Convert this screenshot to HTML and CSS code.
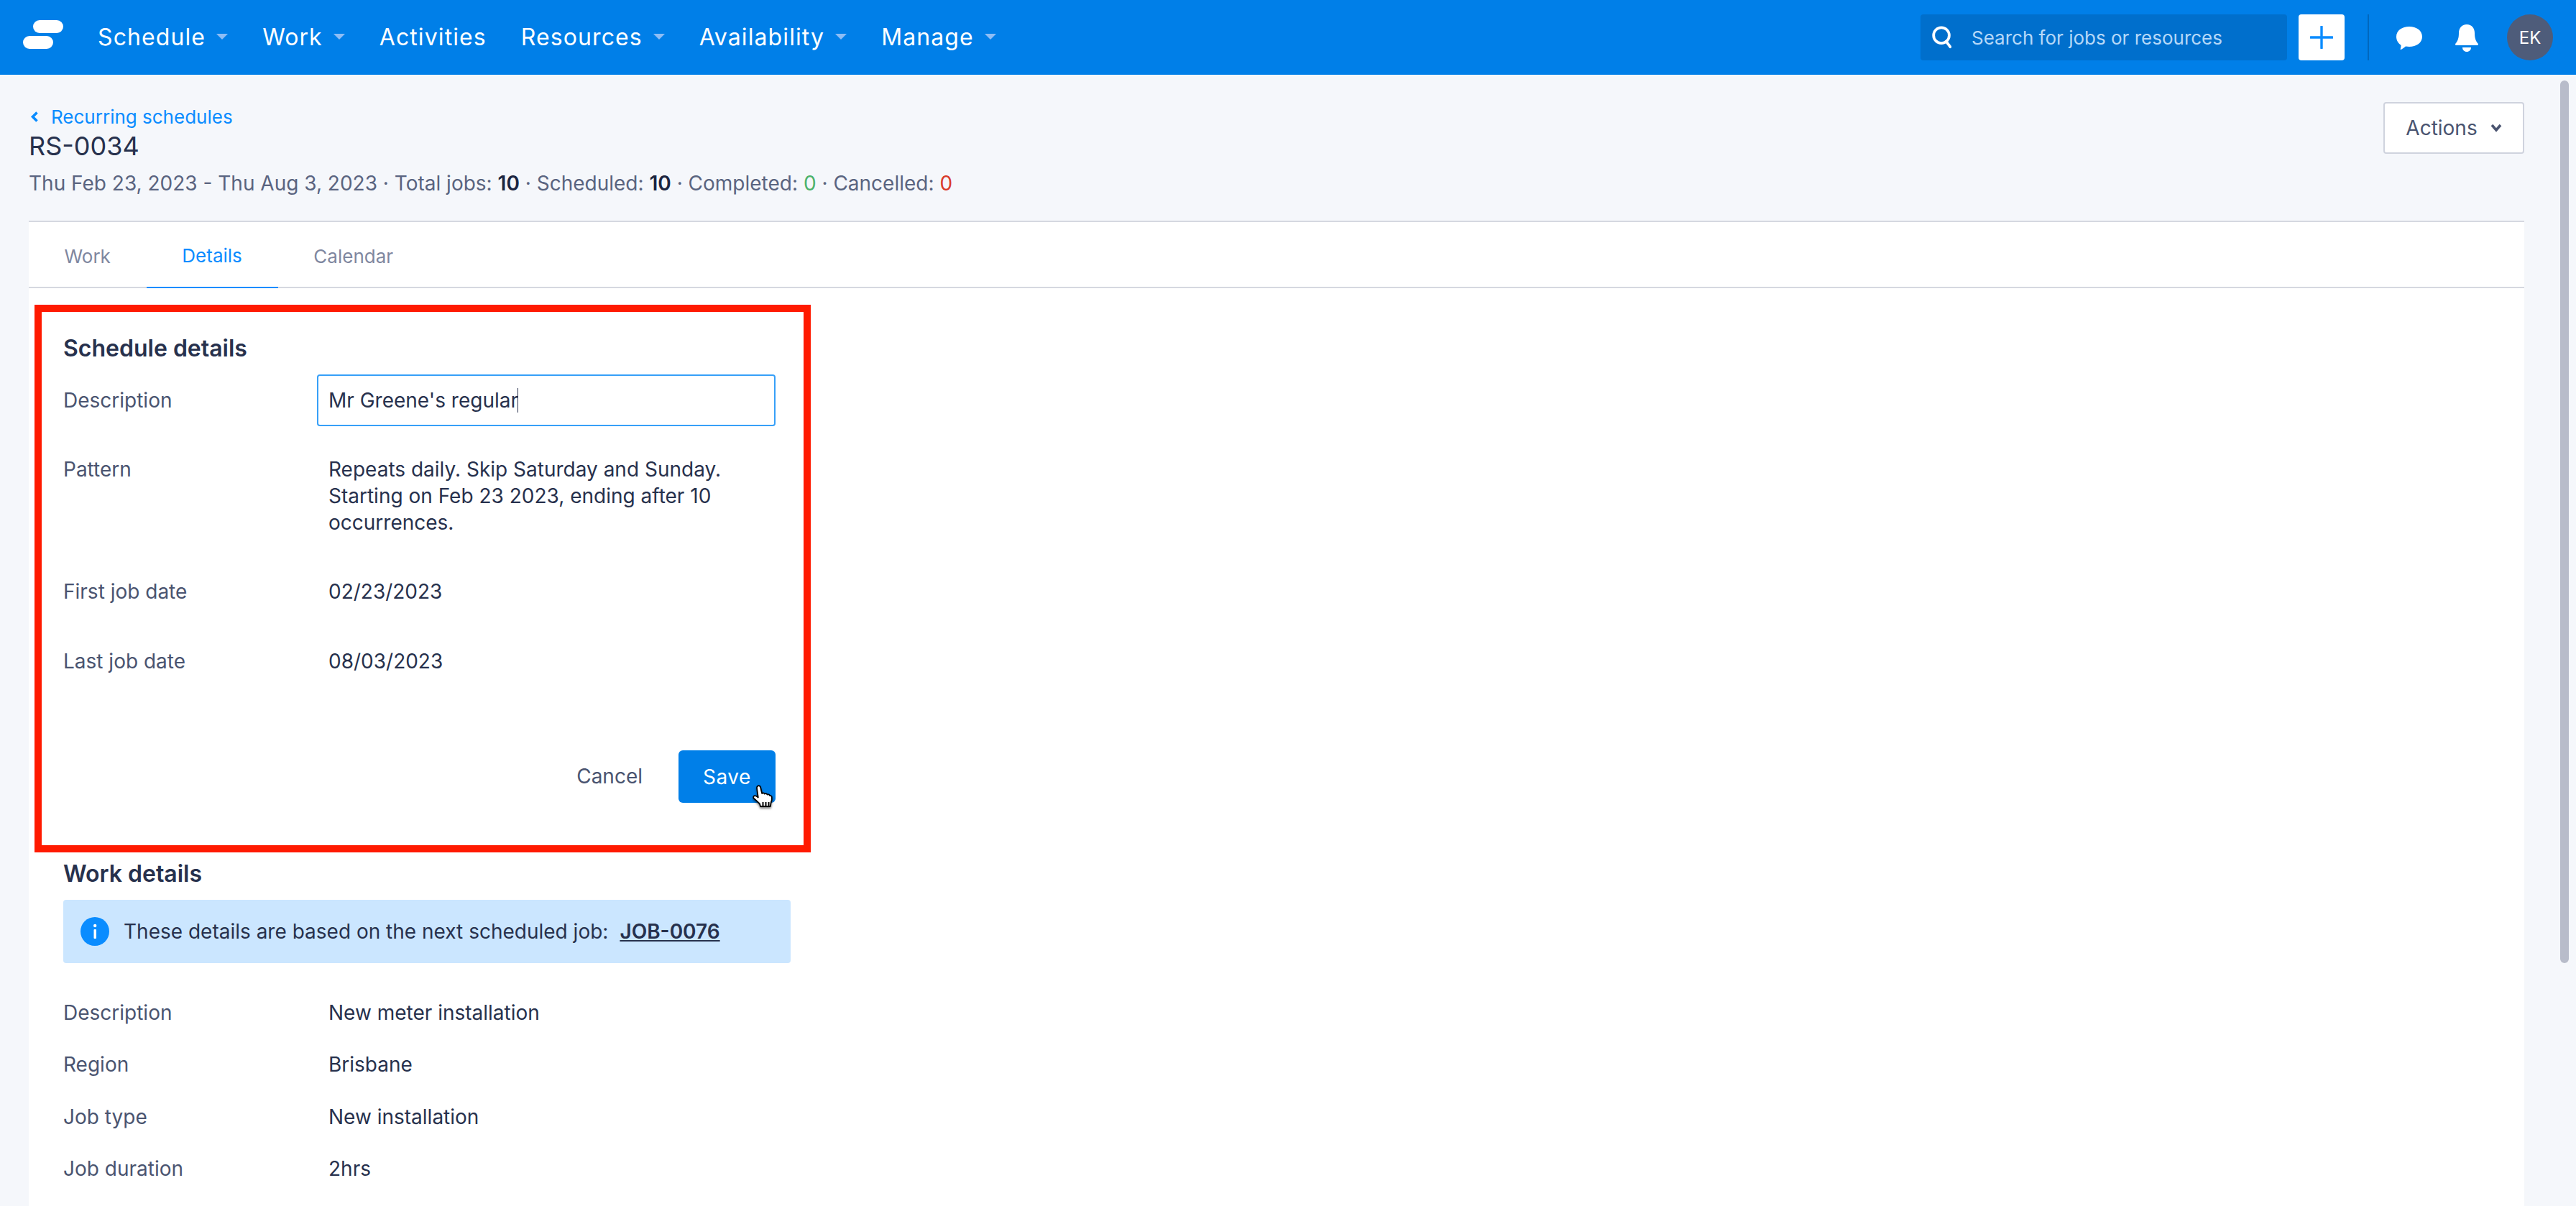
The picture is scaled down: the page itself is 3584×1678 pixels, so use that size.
FILE: index.html
```html
<!DOCTYPE html>
<html lang="en">
<head>
<meta charset="utf-8">
<title>RS-0034</title>
<link rel="stylesheet" href="styles.css">
</head>
<body>
<header class="topbar">
  <svg class="logo" viewBox="0 0 56 40" width="56" height="40"><rect x="14" y="0" width="42" height="18" rx="9" fill="#fff"/><rect x="0" y="22" width="42" height="18" rx="9" fill="#fff"/></svg>
  <nav class="nav">
    <a class="nav-item has-caret">Schedule</a>
    <a class="nav-item has-caret">Work</a>
    <a class="nav-item">Activities</a>
    <a class="nav-item has-caret">Resources</a>
    <a class="nav-item has-caret">Availability</a>
    <a class="nav-item has-caret">Manage</a>
  </nav>
  <div class="top-right">
    <div class="search">
      <svg viewBox="0 0 32 36" width="32" height="34"><circle cx="15" cy="15" r="11.5" fill="none" stroke="#fff" stroke-width="4"/><path d="M22 24l6 8" stroke="#fff" stroke-width="4" stroke-linecap="round"/></svg>
      <span class="search-text">Search for jobs or resources</span>
    </div>
    <div class="plus"><svg viewBox="0 0 32 32" width="32" height="32"><path d="M16 1v30M1 16h30" stroke="#0a8cff" stroke-width="3.4" stroke-linecap="round"/></svg></div>
    <div class="divider"></div>
    <svg class="chat" viewBox="0 0 36 32" width="36" height="32"><path d="M18 0c10 0 18 5.500 18 14s-8 14-18 14c-2 0-3.500-.2-5-.5C10.500 29.500 8 31 6.500 32c-.6.2-1-.2-.8-.8.500-1.500.800-3 .800-5.500C2.500 23 0 19 0 14 0 5.500 8 0 18 0z" fill="#fff"/></svg>
    <svg class="bell" viewBox="0 0 32 38" width="32" height="38"><path d="M16 0c7 0 11 5 11 12 0 7 1.500 11 4.500 14.500.8 1 .5 2.500-1 2.500H1.500c-1.500 0-1.800-1.500-1-2.500C3.500 23 5 19 5 12 5 5 9 0 16 0z" fill="#fff"/><path d="M10 32h12c0 3.500-2.500 6-6 6s-6-2.500-6-6z" fill="#fff"/></svg>
    <div class="avatar">EK</div>
  </div>
</header>

<main class="page">
  <div class="page-head">
    <div class="head-text">
      <a class="crumb"><svg viewBox="0 0 11 15" width="11" height="15"><path d="M9.500 1.500L3.500 7.500l6 6" fill="none" stroke="#0a8cff" stroke-width="3.600"/></svg>Recurring schedules</a>
      <h1 class="title">RS-0034</h1>
      <p class="meta">Thu Feb 23, 2023 - Thu Aug 3, 2023 · Total jobs: <b>10</b> · Scheduled: <b>10</b> · Completed: <span class="green">0</span> · Cancelled: <span class="red">0</span></p>
    </div>
    <button class="actions">Actions<svg viewBox="0 0 16 12" width="16" height="12"><path d="M2 2l6 7 6-7" fill="none" stroke="#4a5470" stroke-width="3.600"/></svg></button>
  </div>

  <section class="panel">
    <div class="tabs">
      <a class="tab">Work</a>
      <a class="tab active">Details</a>
      <a class="tab">Calendar</a>
    </div>
    <div class="content">
      <h2 class="section-title">Schedule details</h2>
      <div class="form-row input-row">
        <span class="label">Description</span>
        <div class="input">Mr Greene's regular<span class="caret"></span></div>
      </div>
      <div class="form-row pattern-row">
        <span class="label">Pattern</span>
        <span class="value">Repeats daily. Skip Saturday and Sunday. Starting on Feb 23 2023, ending after 10 occurrences.</span>
      </div>
      <div class="form-row date-row">
        <span class="label">First job date</span>
        <span class="value">02/23/2023</span>
      </div>
      <div class="form-row date-row">
        <span class="label">Last job date</span>
        <span class="value">08/03/2023</span>
      </div>
      <div class="form-actions">
        <a class="cancel">Cancel</a>
        <button class="save">Save</button>
      </div>

      <h2 class="section-title work-title">Work details</h2>
      <div class="alert">
        <svg viewBox="0 0 40 40" width="40" height="40"><circle cx="20" cy="20" r="20" fill="#0a8cff"/><rect x="18.500" y="17" width="3.500" height="13" rx="1" fill="#fff"/><circle cx="20.200" cy="12" r="2.200" fill="#fff"/></svg>
        <span>These details are based on the next scheduled job:</span>
        <a class="alert-link">JOB-0076</a>
      </div>
      <div class="form-row detail-row"><span class="label">Description</span><span class="value">New meter installation</span></div>
      <div class="form-row detail-row"><span class="label">Region</span><span class="value">Brisbane</span></div>
      <div class="form-row detail-row"><span class="label">Job type</span><span class="value">New installation</span></div>
      <div class="form-row detail-row"><span class="label">Job duration</span><span class="value">2hrs</span></div>
    </div>
  </section>
</main>

<div class="highlight"></div>
<svg class="hand" viewBox="0 0 34 38" width="34" height="38"><defs><filter id="s" x="-30%" y="-30%" width="160%" height="160%"><feDropShadow dx="0" dy="2" stdDeviation="1.500" flood-color="#000" flood-opacity=".5"/></filter></defs><path filter="url(#s)" d="M8 2c1.500-1.500 3.500-.8 4 1l2.200 9c1-1 3-.8 3.600.6 1-1 3.200-.6 3.600 1 1.200-.6 3-.2 3.600 1.400.8-.2 2.500.2 2.800 2 .4 3-.2 6-1.200 8l-.8 5H12l-1-3.500c-2-2-5.500-5.500-8-7.500-1.500-1.500-.8-3.500 1-3.800 1.500-.2 3 .8 4.800 2.300L7 4.500C6.800 3.500 7.200 2.600 8 2z" fill="#fff" stroke="#000" stroke-width="1.800" stroke-linejoin="round"/><path d="M15.500 24v6.500M19.500 24v6.500M23.500 24v6.500" stroke="#000" stroke-width="2"/></svg>
<div class="scrollbar"></div>
</body>
</html>
```

FILE: styles.css
```css
* { box-sizing: border-box; }
html, body { margin: 0; padding: 0; height: 100%; overflow: hidden; }
body {
  background: #f5f7fb;
  font-family: Inter, "Liberation Sans", sans-serif;
  font-size: 28px;
  line-height: 37px;
  color: #27314d;
}
a { color: inherit; text-decoration: none; }
h1, h2, p { margin: 0; font-weight: 400; }
button { font-family: inherit; cursor: pointer; }

.topbar {
  height: 104px;
  background: #007fe8;
  display: flex;
  align-items: center;
  padding: 0 32px;
}
.logo { flex: none; margin-top: -8px; }
.nav { display: flex; margin-left: 48px; margin-top: -2px; gap: 48px; }
.nav-item {
  color: #fff;
  font-size: 32px;
  font-weight: 400;
  letter-spacing: 1.100px;
  display: flex;
  align-items: center;
}
.has-caret::after {
  content: "";
  margin-left: 15px;
  border-left: 8.500px solid transparent;
  border-right: 8.500px solid transparent;
  border-top: 8px solid #8dbdf5;
}
.top-right { margin-left: auto; display: flex; align-items: center; }
.search {
  width: 510px;
  height: 64px;
  background: #006fcc;
  border-radius: 4px;
  display: flex;
  align-items: center;
  padding-left: 14px;
}
.search-text { color: #b5d8f8; font-size: 26px; margin-left: 25px; }
.plus {
  width: 64px;
  height: 64px;
  margin-left: 16px;
  background: #fff;
  border-radius: 4px;
  display: flex;
  align-items: center;
  justify-content: center;
}
.divider { width: 2px; height: 64px; background: #0067bd; margin-left: 32px; }
.chat { margin-left: 38px; margin-top: 2px; }
.bell { margin-left: 46px; margin-top: 2px; }
.avatar {
  width: 64px;
  height: 64px;
  margin-left: 40px;
  border-radius: 50%;
  background: #4e5c7a;
  color: #fff;
  font-size: 24px;
  display: flex;
  align-items: center;
  justify-content: center;
}

.page { padding: 0 72px 0 40px; }
.page-head {
  height: 203px;
  padding-top: 40px;
  display: flex;
  justify-content: space-between;
  align-items: flex-start;
}
.crumb { display: flex; align-items: center; color: #0a8cff; font-size: 26px; line-height: 37px; height: 37px; }
.crumb svg { margin: 0 18px 0 2px; }
.title { font-size: 36px; line-height: 44px; color: #27314d; }
.meta { margin-top: 12px; color: #5a6480; }
.meta b { color: #1c2540; font-weight: 600; }
.green { color: #4cb26a; }
.red { color: #d93a2b; }
.actions {
  width: 196px;
  height: 72px;
  margin-top: -2px;
  background: #fff;
  border: 2px solid #cfd3de;
  border-radius: 4px;
  color: #4a5470;
  font-size: 28px;
  display: flex;
  align-items: center;
  justify-content: center;
  gap: 18px;
  padding: 0;
}

.panel { background: #fff; border-top: 2px solid #d5d8e0; height: 1400px; }
.tabs { display: flex; height: 92px; border-bottom: 2px solid #d5d8e0; }
.tab {
  height: 92px;
  padding: 2px 50px 0 49.500px;
  display: flex;
  align-items: center;
  color: #7f87a0;
  font-size: 26px;
}
.tab.active { color: #0a8cff; border-bottom: 2px solid #0a8cff; }
.content { padding: 64px 0 0 48px; width: 1060px; }
.section-title { font-size: 32px; line-height: 40px; font-weight: 600; color: #27314d; }
.form-row { display: grid; grid-template-columns: 353px 638px; }
.label { color: #4a5470; }
.value { padding-left: 16px; }
.input-row { margin-top: 16px; align-items: center; }
.input {
  height: 72px;
  border: 2px solid #37a0f8;
  border-radius: 4px;
  padding-left: 14px;
  display: flex;
  align-items: center;
  color: #27314d;
}
.caret { width: 1px; height: 34px; background: #27314d; margin-left: -1px; }
.pattern-row { margin-top: 42px; }
.pattern-row .value { line-height: 37px; }
.date-row { margin-top: 59px; }
.date-row + .date-row { margin-top: 60px; }
.form-actions {
  margin-top: 105px;
  width: 991px;
  display: flex;
  justify-content: flex-end;
  align-items: center;
  gap: 50px;
}
.cancel { color: #4a5470; }
.save {
  width: 135px;
  height: 73px;
  background: #007fe8;
  color: #fff;
  border: 0;
  border-radius: 6px;
  font-size: 28px;
  font-weight: 400;
  letter-spacing: .5px;
  padding: 0;
}
.work-title { margin-top: 79px; }
.alert {
  width: 1012px;
  height: 88px;
  margin-top: 16px;
  margin-bottom: 51px;
  background: #cbe6ff;
  border-radius: 4px;
  display: flex;
  align-items: center;
  padding-left: 24px;
}
.alert span { margin-left: 20px; }
.alert-link { margin-left: 16px; font-weight: 600; text-decoration: underline; }
.detail-row { height: 72.300px; }

.highlight {
  position: absolute;
  left: 48px;
  top: 424px;
  width: 1080px;
  height: 762px;
  border: 10px solid #ff1a00;
  pointer-events: none;
}
.hand { position: absolute; left: 1046px; top: 1092px; }
.scrollbar {
  position: absolute;
  left: 3562px;
  top: 112px;
  width: 12px;
  height: 1228px;
  border-radius: 6px;
  background: #b8bcca;
}
```
